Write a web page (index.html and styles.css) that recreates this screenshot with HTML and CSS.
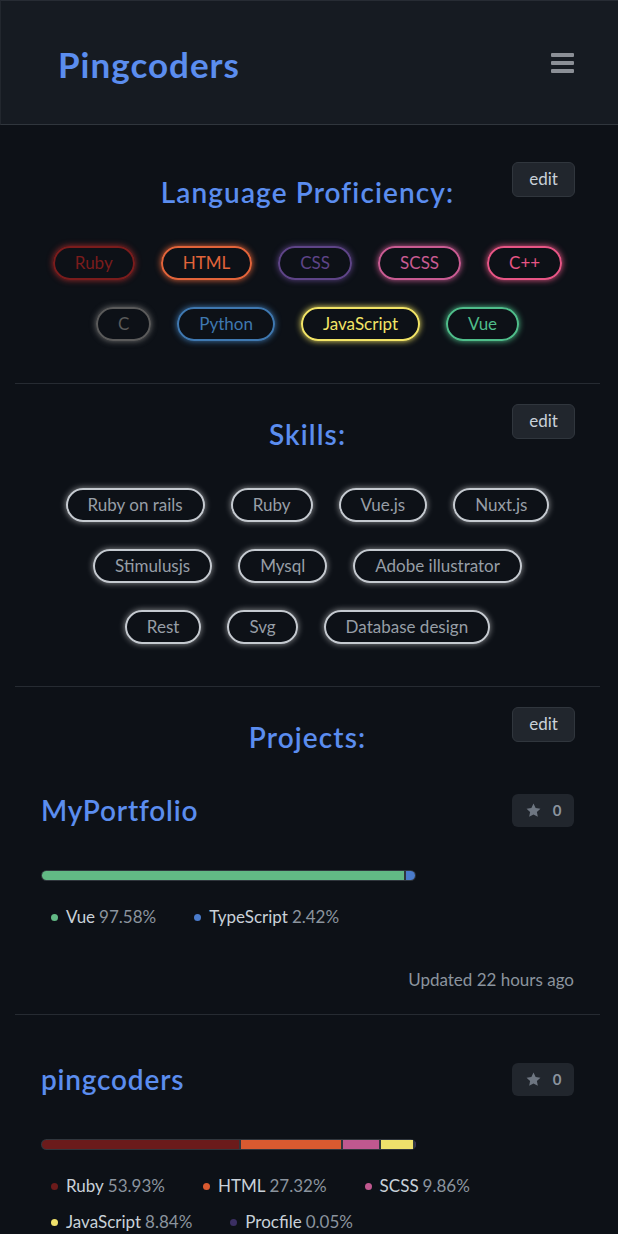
FILE: index.html
```html
<!DOCTYPE html>
<html lang="en">
<head>
<meta charset="utf-8">
<title>Pingcoders</title>
<link rel="stylesheet" href="styles.css">
</head>
<body>
<header class="topbar">
  <a class="logo" href="#">Pingcoders</a>
  <button class="menu" aria-label="menu">
    <svg width="23" height="20" viewBox="0 0 23 20"><rect x="0" y="0" width="23" height="4" rx="1"/><rect x="0" y="8" width="23" height="4" rx="1"/><rect x="0" y="16" width="23" height="4" rx="1"/></svg>
  </button>
</header>
<main class="content">
  <section class="panel">
    <div class="panel-head">
      <h2 class="panel-title">Language Proficiency:</h2>
      <button class="edit">edit</button>
    </div>
    <ul class="pills">
      <li class="pill lang-ruby">Ruby</li>
      <li class="pill lang-html">HTML</li>
      <li class="pill lang-css">CSS</li>
      <li class="pill lang-scss">SCSS</li>
      <li class="pill lang-cpp">C++</li>
      <li class="pill lang-c">C</li>
      <li class="pill lang-python">Python</li>
      <li class="pill lang-js">JavaScript</li>
      <li class="pill lang-vue">Vue</li>
    </ul>
  </section>
  <section class="panel">
    <div class="panel-head">
      <h2 class="panel-title">Skills:</h2>
      <button class="edit">edit</button>
    </div>
    <ul class="pills">
      <li class="pill skill">Ruby on rails</li>
      <li class="pill skill">Ruby</li>
      <li class="pill skill">Vue.js</li>
      <li class="pill skill">Nuxt.js</li>
      <li class="pill skill">Stimulusjs</li>
      <li class="pill skill">Mysql</li>
      <li class="pill skill">Adobe illustrator</li>
      <li class="pill skill">Rest</li>
      <li class="pill skill">Svg</li>
      <li class="pill skill">Database design</li>
    </ul>
  </section>
  <section class="panel panel-projects">
    <div class="panel-head">
      <h2 class="panel-title">Projects:</h2>
      <button class="edit">edit</button>
    </div>
    <article class="project">
      <div class="project-head">
        <h3 class="project-name">MyPortfolio</h3>
        <button class="star"><svg width="17" height="17" viewBox="0 0 24 24"><path d="M12 2.2l3 6.3 6.8.9-5 4.7 1.3 6.8L12 17.6l-6.1 3.3 1.3-6.8-5-4.7 6.8-.9z"/></svg><span>0</span></button>
      </div>
      <div class="langbar">
        <span class="seg c-vue" style="width:97.58%"></span>
        <span class="seg c-ts" style="width:2.42%"></span>
      </div>
      <ul class="legend">
        <li class="legend-item"><i class="dot c-vue"></i><span class="lname">Vue</span><span class="pct">97.58%</span></li>
        <li class="legend-item"><i class="dot c-ts"></i><span class="lname">TypeScript</span><span class="pct">2.42%</span></li>
      </ul>
      <p class="updated">Updated 22 hours ago</p>
    </article>
    <article class="project">
      <div class="project-head">
        <h3 class="project-name">pingcoders</h3>
        <button class="star"><svg width="17" height="17" viewBox="0 0 24 24"><path d="M12 2.2l3 6.3 6.8.9-5 4.7 1.3 6.8L12 17.6l-6.1 3.3 1.3-6.8-5-4.7 6.8-.9z"/></svg><span>0</span></button>
      </div>
      <div class="langbar">
        <span class="seg c-ruby" style="width:53.93%"></span>
        <span class="seg c-html" style="width:27.32%"></span>
        <span class="seg c-scss" style="width:9.86%"></span>
        <span class="seg c-js" style="width:8.84%"></span>
        <span class="seg c-proc" style="width:0.05%"></span>
      </div>
      <ul class="legend">
        <li class="legend-item"><i class="dot c-ruby"></i><span class="lname">Ruby</span><span class="pct">53.93%</span></li>
        <li class="legend-item"><i class="dot c-html"></i><span class="lname">HTML</span><span class="pct">27.32%</span></li>
        <li class="legend-item"><i class="dot c-scss"></i><span class="lname">SCSS</span><span class="pct">9.86%</span></li>
        <li class="legend-item"><i class="dot c-js"></i><span class="lname">JavaScript</span><span class="pct">8.84%</span></li>
        <li class="legend-item"><i class="dot c-proc"></i><span class="lname">Procfile</span><span class="pct">0.05%</span></li>
      </ul>
      <p class="updated">Updated 2 days ago</p>
    </article>
  </section>
</main>
</body>
</html>
```
FILE: styles.css
```css
* { box-sizing: border-box; }
html, body { margin: 0; }
body {
  background: #0d1117;
  color: #c9d1d9;
  font-family: Lato, "Liberation Sans", sans-serif;
}
.topbar {
  height: 125px;
  background: #161b22;
  border-top: 1px solid #272c34;
  border-left: 1px solid #22272e;
  border-bottom: 1px solid #30363d;
  display: flex;
  align-items: center;
  justify-content: space-between;
  padding: 0 44px 0 57px;
}
.logo {
  color: #5b8def;
  font-size: 35px;
  font-weight: 700;
  text-decoration: none;
  letter-spacing: 1px;
  margin-top: 2px;
}
.menu {
  background: none;
  border: 0;
  padding: 0;
  display: flex;
  fill: #8b8f96;
  margin-top: 1px;
}
.content { padding: 17px 18px 0 15px; }
.panel {
  padding: 20px 0 42px;
  border-bottom: 1px solid #262b32;
}
.panel-projects { border-bottom: 0; padding-bottom: 0; }
.panel-head {
  display: grid;
  grid-template-columns: 1fr auto 1fr;
  align-items: start;
}
.panel-title {
  grid-column: 2;
  margin: 12px 0 0;
  font-size: 28px;
  line-height: 36px;
  font-weight: 600;
  color: #5b8def;
  letter-spacing: 1.1px;
}
.edit {
  grid-column: 3;
  justify-self: end;
  margin-right: 25px;
  width: 63px;
  height: 35px;
  background: #21262d;
  border: 1px solid #30363d;
  border-radius: 6px;
  color: #c9d1d9;
  font-family: Lato, "Liberation Sans", sans-serif;
  font-size: 17px;
  padding: 0 0 2px;
}
.pills {
  list-style: none;
  margin: 36px auto 0;
  max-width: 520px;
  padding: 0;
  display: flex;
  flex-wrap: wrap;
  justify-content: center;
  column-gap: 26px;
  row-gap: 27px;
}
.pill {
  height: 34px;
  border: 2px solid currentColor;
  border-radius: 17px;
  padding: 0 20px 1px;
  display: flex;
  align-items: center;
  font-size: 17px;
  box-shadow: 0 0 6px currentColor;
}
.lang-ruby { color: #7a1c1c; box-shadow: 0 0 6px #a02a2a; }
.lang-html { color: #e2643a; }
.lang-css { color: #5e4487; }
.lang-scss { color: #c95b92; }
.lang-cpp { color: #e75585; }
.lang-c { color: #5a5a5a; box-shadow: 0 0 6px #707070; }
.lang-python { color: #3f78b0; }
.lang-js { color: #f2e466; }
.lang-vue { color: #4fbd8a; }
.skill {
  color: #979ea6;
  border-color: #c5cad0;
  box-shadow: 0 0 6px rgba(255, 255, 255, 0.55);
}
.project {
  padding: 37px 26px 24px;
  border-bottom: 1px solid #262b32;
}
.project + .project { padding-top: 46px; }
.project-head {
  display: flex;
  justify-content: space-between;
  align-items: center;
}
.project-name {
  margin: 0;
  font-size: 28px;
  line-height: 36px;
  font-weight: 600;
  color: #5b8def;
  letter-spacing: 0.8px;
}
.star {
  width: 62px;
  height: 33px;
  background: #21262d;
  border: 0;
  border-radius: 6px;
  display: flex;
  align-items: center;
  justify-content: center;
  gap: 11px;
  color: #8b949e;
  fill: #6e7681;
  font-family: Lato, "Liberation Sans", sans-serif;
  font-size: 15px;
  font-weight: 700;
  padding: 0;
}
.langbar {
  margin-top: 42px;
  width: 70.4%;
  height: 11px;
  display: flex;
  gap: 2px;
  background: #30363d;
  border-radius: 6px;
  padding: 1px;
  overflow: hidden;
}
.seg { display: block; height: 100%; }
.seg:first-child { border-radius: 5px 0 0 5px; }
.seg:last-child { border-radius: 0 5px 5px 0; }
.c-vue { background: #62b985; }
.c-ts { background: #4a7bcb; }
.c-ruby { background: #6b1b1b; }
.c-html { background: #d95a30; }
.c-scss { background: #c0588f; }
.c-js { background: #efe16b; }
.c-proc { background: #3b2f63; }
.legend {
  list-style: none;
  margin: 26px 0 0;
  padding: 0 0 0 10px;
  display: flex;
  flex-wrap: wrap;
  column-gap: 38px;
  row-gap: 16px;
  font-size: 17px;
  line-height: 20px;
}
.legend-item { display: flex; align-items: center; }
.dot {
  width: 7px;
  height: 7px;
  border-radius: 50%;
  margin-right: 8px;
}
.lname { color: #c9d1d9; }
.pct { color: #8b949e; margin-left: 4px; }
.updated {
  margin: 43px 0 0;
  text-align: right;
  color: #8b949e;
  font-size: 17px;
  line-height: 20px;
}
```
